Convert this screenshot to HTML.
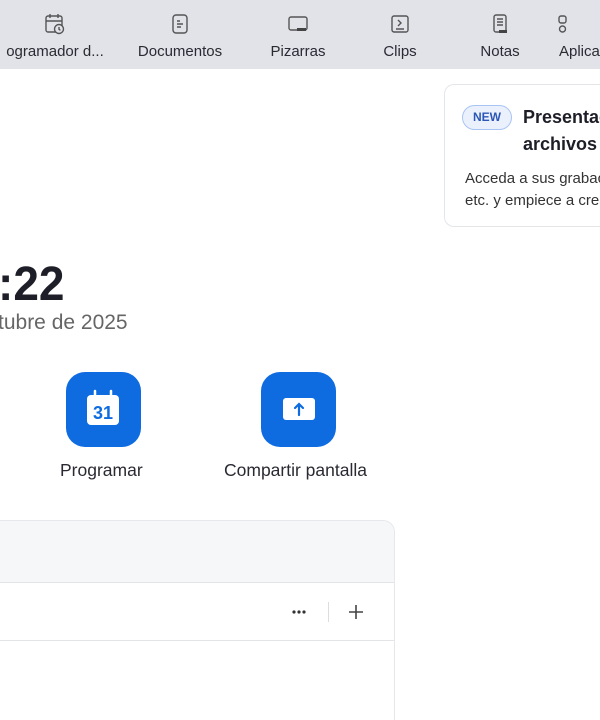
<!DOCTYPE html>
<html style="overflow:hidden"><head><meta charset="utf-8"><style>
*{margin:0;padding:0;box-sizing:border-box}
html,body{width:600px;height:720px;overflow:hidden}
body{background:#fff;font-family:"Liberation Sans",sans-serif;position:relative;color:#222}
.top{position:absolute;left:0;top:0;width:600px;height:69px;background:#e1e3e8;overflow:hidden}
.tab{position:absolute;top:0;height:69px;text-align:center;font-size:15px;color:#2a2a33}
.tab svg{position:absolute;top:12px;left:50%;margin-left:-11px}
.tab span{position:absolute;top:43px;left:-20px;right:-20px;white-space:nowrap}
.card{position:absolute;left:444px;top:84px;width:156px;height:143px;border:1px solid #e4e5e9;border-right:none;border-radius:10px 0 0 10px;background:#fff;overflow:hidden}
.new{position:absolute;left:17px;top:20px;width:50px;height:25px;border:1px solid #a9c4f3;background:#eaf1fd;border-radius:13px;color:#2b57b5;font-size:12px;font-weight:bold;text-align:center;line-height:23px}
.btn{position:absolute;width:75px;height:75px;background:#0e6ce0;border-radius:19px}
.lbl{position:absolute;font-size:17.5px;color:#2a2a33;white-space:nowrap}
</style></head><body>
<div class="top">
 <div class="tab" style="left:-10px;width:130px"><svg width="22" height="24" viewBox="0 0 22 24" fill="none" stroke="#555" stroke-width="1.4"><rect x="2" y="4" width="16" height="16" rx="2"/><path d="M2 9h16M6 2v4M14 2v4"/><circle cx="15" cy="17" r="4.5" fill="#e1e3e8"/><path d="M15 15v2.3l1.4 1"/></svg><span style="left:0;right:0">ogramador d...</span></div>
 <div class="tab" style="left:120px;width:120px"><svg width="22" height="24" viewBox="0 0 22 24" fill="none" stroke="#555" stroke-width="1.4"><rect x="4" y="3" width="14" height="18" rx="3"/><path d="M8 9h3M8 12h6M8 15h4"/></svg><span>Documentos</span></div>
 <div class="tab" style="left:248px;width:100px"><svg width="22" height="24" viewBox="0 0 22 24" fill="none" stroke="#555" stroke-width="1.4"><rect x="2" y="5" width="18" height="13" rx="2"/><rect x="10" y="16" width="9" height="3" fill="#444" stroke="none"/></svg><span>Pizarras</span></div>
 <div class="tab" style="left:360px;width:80px"><svg width="22" height="24" viewBox="0 0 22 24" fill="none" stroke="#555" stroke-width="1.4"><rect x="3" y="4" width="16" height="16" rx="2"/><path d="M9 8l3 3-3 3M7 17h8"/></svg><span>Clips</span></div>
 <div class="tab" style="left:460px;width:80px"><svg width="22" height="24" viewBox="0 0 22 24" fill="none" stroke="#555" stroke-width="1.4"><rect x="5" y="3" width="12" height="17" rx="2"/><path d="M8 7h6M8 10h6M8 13h6"/><rect x="10" y="18" width="8" height="3" fill="#444" stroke="none"/></svg><span>Notas</span></div>
 <div class="tab" style="left:556px;width:44px;overflow:hidden"><svg width="22" height="24" viewBox="0 0 22 24" fill="none" stroke="#555" stroke-width="1.4" style="left:0;margin-left:0"><rect x="3" y="4" width="7" height="7" rx="2"/><circle cx="6.5" cy="17" r="3"/></svg><span style="left:3px;right:auto;text-align:left">Aplicaciones</span></div>
</div>
<div class="card">
 <div class="new">NEW</div>
 <div style="position:absolute;left:78px;top:19px;font-size:18px;font-weight:bold;line-height:27px;color:#1e1e28;white-space:nowrap">Presentación de<br>archivos</div>
 <div style="position:absolute;left:20px;top:83px;font-size:15px;line-height:22px;color:#333;white-space:nowrap">Acceda a sus grabaciones<br>etc. y empiece a crear</div>
</div>
<div style="position:absolute;left:-2px;top:256px;font-size:46px;font-weight:bold;color:#1e1e28;transform:scaleY(1.05)">:22</div>
<div style="position:absolute;left:-2px;top:311px;font-size:21px;color:#666">tubre de 2025</div>
<div class="btn" style="left:66px;top:372px"><svg width="75" height="75" viewBox="0 0 75 75"><rect x="21" y="23" width="32" height="30" rx="4" fill="#fff"/><path d="M29 19v7M45 19v7" stroke="#fff" stroke-width="2.5" stroke-linecap="round"/><text x="37" y="47" text-anchor="middle" font-family="Liberation Sans" font-weight="bold" font-size="18" fill="#0e6ce0">31</text></svg></div>
<div class="lbl" style="left:60px;top:460px">Programar</div>
<div class="btn" style="left:261px;top:372px"><svg width="75" height="75" viewBox="0 0 75 75"><rect x="22" y="26" width="32" height="22" rx="3" fill="#fff"/><path d="M38 43v-11M34 36l4-4 4 4" stroke="#0e6ce0" stroke-width="2.2" fill="none" stroke-linecap="round"/></svg></div>
<div class="lbl" style="left:224px;top:460px">Compartir pantalla</div>
<div style="position:absolute;left:-20px;top:520px;width:415px;height:200px;border:1px solid #e6e7ea;border-bottom:none;border-radius:12px 12px 0 0;background:#fff;overflow:hidden">
 <div style="height:62px;background:#f6f7f9;border-bottom:1px solid #e3e4e8"></div>
 <div style="height:58px;border-bottom:1px solid #e3e4e8;position:relative">
  <svg style="position:absolute;left:310px;top:26px" width="16" height="6"><circle cx="3" cy="3" r="1.6" fill="#333"/><circle cx="8" cy="3" r="1.6" fill="#333"/><circle cx="13" cy="3" r="1.6" fill="#333"/></svg>
  <div style="position:absolute;left:347px;top:19px;width:1px;height:20px;background:#ddd"></div>
  <svg style="position:absolute;left:367px;top:21px" width="16" height="16"><path d="M8 1v14M1 8h14" stroke="#444" stroke-width="1.6"/></svg>
 </div>
</div>
</body></html>
